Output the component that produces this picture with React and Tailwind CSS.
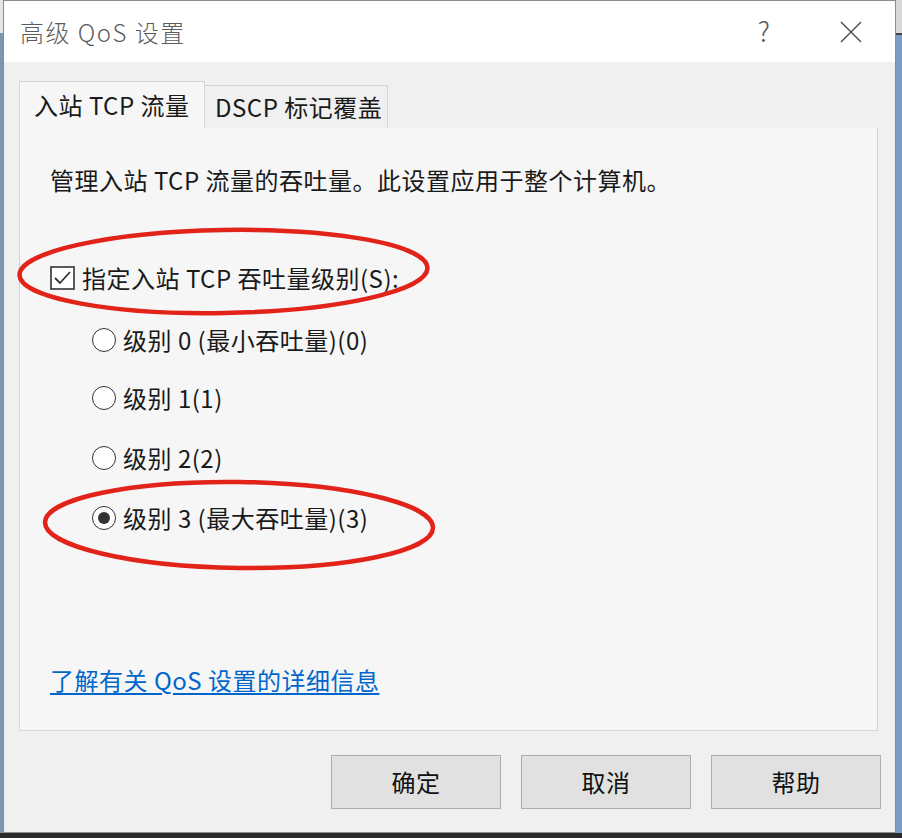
const radios = [
  { label: '级别 0 (最小吞吐量)(0)', checked: false, mt: 'mt-[30px]' },
  { label: '级别 1(1)', checked: false, mt: 'mt-[26px]' },
  { label: '级别 2(2)', checked: false, mt: 'mt-[28px]' },
  { label: '级别 3 (最大吞吐量)(3)', checked: true, mt: 'mt-[28px]' },
];

function Radio({ checked }) {
  return (
    <span className="flex h-[24px] w-[24px] shrink-0 items-center justify-center rounded-full border-[1.5px] border-[#333] bg-white">
      {checked && <span className="h-[12px] w-[12px] rounded-full bg-[#333]" />}
    </span>
  );
}

function Checkbox() {
  return (
    <svg width="25" height="24" viewBox="0 0 25 24" className="shrink-0">
      <rect x="1" y="1" width="23" height="22" fill="#fff" stroke="#333" strokeWidth="1.6" />
      <polyline points="5,12 10,17 20,6" fill="none" stroke="#333" strokeWidth="1.8" />
    </svg>
  );
}

export default function App() {
  return (
    <div className="relative flex h-[838px] w-[902px] flex-col overflow-hidden bg-[#2a2a2a] font-['Noto_Sans_CJK_SC',sans-serif] text-[#1a1a1a]">
      <div className="flex h-[833px]">
        <div className="flex w-[3px] flex-col">
          <div className="h-[33px] bg-[#e4e4e4]" />
          <div className="flex-1 bg-[#7f97b3]" />
        </div>

        <div className="flex flex-1 flex-col border border-[#8c8c8c] bg-[#f0f0f0]">
          <div className="flex h-[61px] items-center bg-white pl-[16px] pr-[33px]">
            <span className="text-[24px] font-light tracking-[1.5px] text-[#5c5c5c]">高级 QoS 设置</span>
            <span className="ml-auto mr-[70px] text-[27px] font-light text-[#555]">?</span>
            <svg width="22" height="22" viewBox="0 0 22 22" className="text-[#444]">
              <path d="M1 1L21 21M21 1L1 21" stroke="currentColor" strokeWidth="1.3" />
            </svg>
          </div>

          <div className="flex flex-col pl-[15px] pt-[19px] tracking-[0.5px]">
            <div className="flex h-[47px] items-end">
              <div className="flex h-[47px] w-[186px] items-center border border-b-0 border-[#d6d6d6] bg-[#f6f6f6] pl-[14px] text-[24px]">
                入站 TCP 流量
              </div>
              <div className="flex h-[43px] w-[183px] items-center border border-b-0 border-l-0 border-[#d6d6d6] bg-[#f0f0f0] pl-[10px] text-[24px]">
                DSCP 标记覆盖
              </div>
            </div>

            <div className="flex h-[603px] w-[859px] flex-col border border-t-0 border-[#d6d6d6] bg-[#f6f6f6] pl-[30px] pt-[36px] text-[24px]">
              <div className="flex h-[32px] items-center">管理入站 TCP 流量的吞吐量。此设置应用于整个计算机。</div>

              <label className="mt-[66px] flex h-[32px] items-center gap-[7px]">
                <Checkbox />
                <span>指定入站 TCP 吞吐量级别(S):</span>
              </label>

              <div className="flex flex-col pl-[42px]">
                {radios.map((r) => (
                  <label key={r.label} className={`${r.mt} flex h-[32px] items-center gap-[7px]`}>
                    <Radio checked={r.checked} />
                    <span>{r.label}</span>
                  </label>
                ))}
              </div>

              <a className="mt-[130px] flex h-[32px] items-center text-[#0066cc] underline underline-offset-[3px]">
                了解有关 QoS 设置的详细信息
              </a>
            </div>

            <div className="mt-[24px] flex justify-end gap-[20px] pr-[14px]">
              {['确定', '取消', '帮助'].map((t) => (
                <button
                  key={t}
                  type="button"
                  className="flex h-[54px] w-[170px] items-center justify-center border border-[#adadad] bg-[#e1e1e1] text-[24px] text-[#111]"
                >
                  {t}
                </button>
              ))}
            </div>
          </div>
        </div>

        <div className="flex w-[6px] flex-col">
          <div className="h-[33px] bg-[#d8d8d8]" />
          <div className="h-[2px] bg-[#444]" />
          <div className="flex-1 bg-[#7c9cc4]" />
        </div>
      </div>

      <svg className="pointer-events-none absolute left-0 top-0" width="902" height="838">
        <ellipse cx="223.5" cy="271.5" rx="204" ry="41.5" fill="none" stroke="#e2231a" strokeWidth="4.5" transform="rotate(-1 223.5 271.5)" />
        <ellipse cx="239" cy="525" rx="194" ry="43" fill="none" stroke="#e2231a" strokeWidth="4.5" transform="rotate(0.8 239 525)" />
      </svg>
    </div>
  );
}
